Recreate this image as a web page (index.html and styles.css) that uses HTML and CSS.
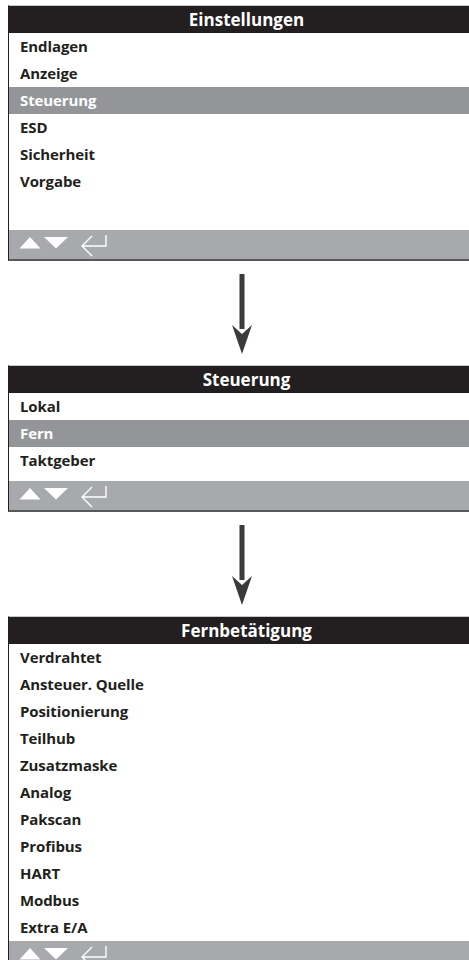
FILE: index.html
```html
<!DOCTYPE html>
<html lang="de">
<head>
  <meta charset="UTF-8" />
  <title>Einstellungen – Menüstruktur</title>
  <link rel="stylesheet" href="styles.css">
</head>
<body>

  <section class="screen">
    <h2 class="screen-title">Einstellungen</h2>
    <ul class="menu">
      <li>Endlagen</li>
      <li>Anzeige</li>
      <li class="active">Steuerung</li>
      <li>ESD</li>
      <li>Sicherheit</li>
      <li>Vorgabe</li>
    </ul>
    <div class="spacer-lg"></div>
    <div class="keys">
      <svg width="92" height="25" viewBox="0 0 92 25">
        <polygon points="11,4 21.5,15.5 0.5,15.5" fill="#fff" />
        <polygon points="25,4 49,4 37,15.5" fill="#fff" />
        <path d="M87 2 V13 H63 M73 3 L63 13 L73 23" fill="none" stroke="#fff" stroke-width="1.4" />
      </svg>
    </div>
  </section>

  <div class="flow-arrow">
    <svg width="20" height="80" viewBox="0 0 20 80">
      <rect x="7.5" y="0" width="5" height="55" fill="#3c3b3c" />
      <polygon points="0,51 10,60 20,51 10,80" fill="#3c3b3c" />
    </svg>
  </div>

  <section class="screen">
    <h2 class="screen-title">Steuerung</h2>
    <ul class="menu">
      <li>Lokal</li>
      <li class="active">Fern</li>
      <li>Taktgeber</li>
    </ul>
    <div class="spacer-sm"></div>
    <div class="keys">
      <svg width="92" height="25" viewBox="0 0 92 25">
        <polygon points="11,4 21.5,15.5 0.5,15.5" fill="#fff" />
        <polygon points="25,4 49,4 37,15.5" fill="#fff" />
        <path d="M87 2 V13 H63 M73 3 L63 13 L73 23" fill="none" stroke="#fff" stroke-width="1.4" />
      </svg>
    </div>
  </section>

  <div class="flow-arrow">
    <svg width="20" height="80" viewBox="0 0 20 80">
      <rect x="7.5" y="0" width="5" height="55" fill="#3c3b3c" />
      <polygon points="0,51 10,60 20,51 10,80" fill="#3c3b3c" />
    </svg>
  </div>

  <section class="screen">
    <h2 class="screen-title">Fernbetätigung</h2>
    <ul class="menu">
      <li>Verdrahtet</li>
      <li>Ansteuer. Quelle</li>
      <li>Positionierung</li>
      <li>Teilhub</li>
      <li>Zusatzmaske</li>
      <li>Analog</li>
      <li>Pakscan</li>
      <li>Profibus</li>
      <li>HART</li>
      <li>Modbus</li>
      <li>Extra E/A</li>
    </ul>
    <div class="keys">
      <svg width="92" height="25" viewBox="0 0 92 25">
        <polygon points="11,4 21.5,15.5 0.5,15.5" fill="#fff" />
        <polygon points="25,4 49,4 37,15.5" fill="#fff" />
        <path d="M87 2 V13 H63 M73 3 L63 13 L73 23" fill="none" stroke="#fff" stroke-width="1.4" />
      </svg>
    </div>
  </section>

</body>
</html>
```

FILE: styles.css
```css
html, body { overflow: hidden; }
body { margin: 0; padding-top: 5px; background: #fff; color: #231f20; font-family: "Open Sans", "Noto Sans", sans-serif; }

.screen { width: 475px; margin-left: 8px; border-top: 1px solid #c9c9ca; border-left: 1px solid #231f20; border-bottom: 2px solid #58595b; }
.screen-title { margin: 0; height: 27px; line-height: 28px; background: #231f20; color: #fff; font-size: 17px; font-weight: 700; text-align: center; }

.menu { list-style: none; margin: 0; padding: 0; }
.menu li { height: 27px; line-height: 27px; padding-left: 11px; font-size: 15px; font-weight: 700; letter-spacing: -0.1px; }
.menu li.active { background: #939598; color: #fff; }

.spacer-lg { height: 35px; }
.spacer-sm { height: 7px; }

.keys { height: 29px; background: #a7a9ac; padding: 3px 0 0 10px; box-sizing: border-box; }
.keys svg { display: block; }

.flow-arrow { padding: 13px 0 11px 232px; }
.flow-arrow svg { display: block; }
```
